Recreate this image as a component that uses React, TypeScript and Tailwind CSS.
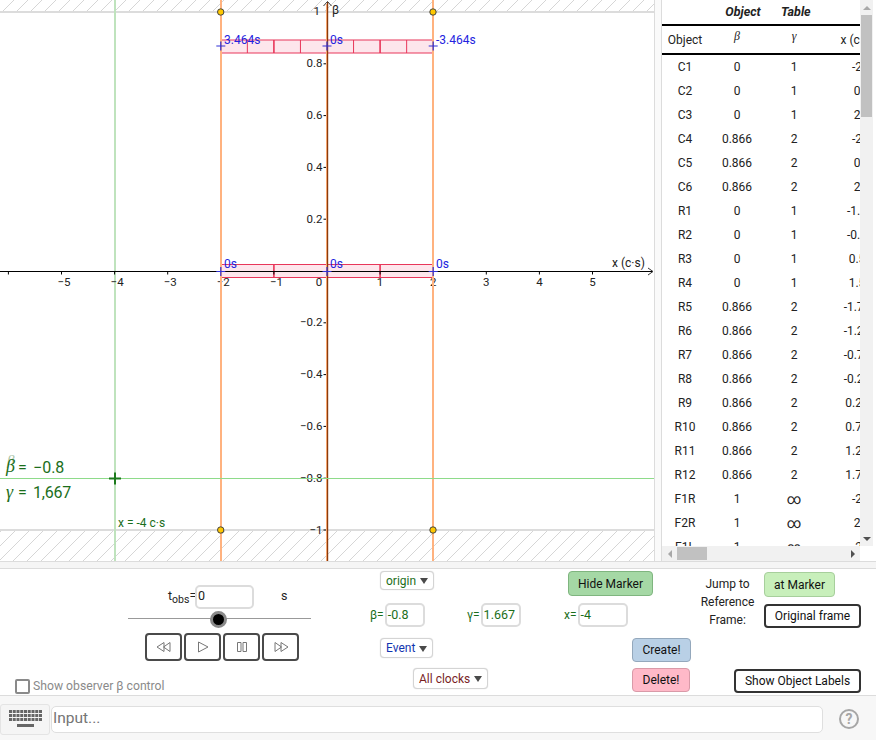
import React from "react";

const rows: [string, string, string, string][] = [
  ["C1", "0", "1", "-2"], ["C2", "0", "1", "0"], ["C3", "0", "1", "2"],
  ["C4", "0.866", "2", "-2"], ["C5", "0.866", "2", "0"], ["C6", "0.866", "2", "2"],
  ["R1", "0", "1", "-1.5"], ["R2", "0", "1", "-0.5"], ["R3", "0", "1", "0.5"], ["R4", "0", "1", "1.5"],
  ["R5", "0.866", "2", "-1.75"], ["R6", "0.866", "2", "-1.25"], ["R7", "0.866", "2", "-0.75"],
  ["R8", "0.866", "2", "-0.25"], ["R9", "0.866", "2", "0.25"], ["R10", "0.866", "2", "0.75"],
  ["R11", "0.866", "2", "1.25"], ["R12", "0.866", "2", "1.75"],
  ["F1R", "1", "∞", "-2"], ["F2R", "1", "∞", "2"], ["F1L", "1", "∞", "-2"],
];

const px = (v: number) => 327 + v * 53.1;
const py = (v: number) => 271 - v * 259;

function Graph() {
  const font = { fontFamily: "Roboto, sans-serif" };
  return (
    <svg width="654" height="561" viewBox="0 0 654 561" className="block" style={font}>
      <defs>
        <pattern id="hatch" width="14" height="14" patternUnits="userSpaceOnUse">
          <path d="M-1 15 L15 -1" stroke="#c4c4c4" strokeWidth="0.7" fill="none" />
          <path d="M-1 1 L1 -1 M13 15 L15 13" stroke="#c4c4c4" strokeWidth="0.7" fill="none" />
        </pattern>
      </defs>
      <rect x="0" y="0" width="654" height="12" fill="url(#hatch)" />
      <rect x="0" y="530" width="654" height="31" fill="url(#hatch)" />
      <rect x="0" y="11" width="654" height="2" fill="#dcdcdc" />
      <rect x="0" y="529" width="654" height="2" fill="#dcdcdc" />

      <rect x="114" y="0" width="2" height="561" fill="#bfe3bd" />

      {[40, 264.5].map((y) => (
        <rect key={y} x={220.7} y={y} width={212.4} height={13} fill="#fde6ec" stroke="#e8365a" strokeWidth={1} />
      ))}
      {[-1.5, -1, -0.5, 0.5, 1, 1.5].map((v) => (
        <line key={v} x1={px(v)} x2={px(v)} y1={40} y2={53} stroke="#e8365a" strokeWidth={v % 1 === 0 ? 1.6 : 1} />
      ))}
      {[-1, 1].map((v) => (
        <line key={v} x1={px(v)} x2={px(v)} y1={264.5} y2={277.5} stroke="#e8365a" strokeWidth={1.6} />
      ))}

      <line x1="0" x2="652" y1="271.5" y2="271.5" stroke="#000" strokeWidth="1" />
      <path d="M648 268 L653 271.5 L648 275" stroke="#000" fill="none" strokeWidth="0.8" />

      {[-6, -5, -4, -3, -2, -1, 1, 2, 3, 4, 5].map((v) => (
        <line key={v} x1={px(v)} x2={px(v)} y1={272} y2={274.5} stroke="#000" strokeWidth="1" />
      ))}
      {[-5, -4, -3, -2, -1, 1, 2, 3, 4, 5].map((v) => (
        <text key={v} x={v < 0 ? px(v) + 2.5 : px(v)} y={285.5} fontSize="11.5" textAnchor="middle" fill="#222">
          {v < 0 ? `−${-v}` : v}
        </text>
      ))}
      <text x="319" y="285.5" fontSize="11.5" textAnchor="middle" fill="#222">0</text>
      <text x="612" y="267" fontSize="12" fill="#222">x (c·s)</text>

      {[0.8, 0.6, 0.4, 0.2, -0.2, -0.4, -0.6, -0.8, -1].map((v) => (
        <g key={v}>
          <line x1={323.5} x2={327} y1={py(v)} y2={py(v)} stroke="#000" strokeWidth="1" />
          <text x="322.5" y={py(v) + 3.5} fontSize="11.5" textAnchor="end" fill="#222">
            {v < 0 ? `−${-v}` : v}
          </text>
        </g>
      ))}
      <text x="320" y="15" fontSize="11.5" textAnchor="end" fill="#222">1</text>
      <text x="332" y="14" fontSize="12" fill="#222">β</text>

      <rect x="220" y="0" width="2" height="561" fill="#ffb27f" />
      <rect x="432" y="0" width="2" height="561" fill="#ffb27f" />
      <rect x="326" y="4" width="1" height="557" fill="#f5a36c" />
      <rect x="327" y="2" width="1.2" height="559" fill="#8a3b0c" />
      <path d="M323.5 6 L327.5 1.5 L331.5 6" stroke="#222" fill="none" strokeWidth="0.9" />

      <line x1="0" x2="654" y1="478.5" y2="478.5" stroke="#8edb8a" strokeWidth="1" />
      <path d="M109 478.5 H121 M115 472.5 V484.5" stroke="#1c7a1c" strokeWidth="2" />
      <text x="118" y="527" fontSize="12" fill="#1b6e1b">x = -4 c·s</text>

      <g fill="#1b6e1b" fontSize="16">
        <text x="6" y="472" fontSize="18" fontFamily="'Liberation Serif', serif" fontStyle="italic">β</text>
        <text x="7" y="465" fontSize="15" fontFamily="'Liberation Serif', serif" fontStyle="italic" opacity="0.4">β</text>
        <text x="18" y="473">=</text>
        <text x="33" y="473">−0.8</text>
        <text x="6" y="498" fontSize="18" fontFamily="'Liberation Serif', serif" fontStyle="italic">γ</text>
        <text x="18" y="498">=</text>
        <text x="33" y="498" letterSpacing="-0.2">1,667</text>
      </g>

      {[-2, 0, 2].map((v) =>
        [46, 271.5].map((y) => (
          <path key={`${v}-${y}`} d={`M${px(v) - 4.5} ${y} H${px(v) + 4.5} M${px(v)} ${y - 4.5} V${y + 4.5}`} stroke="#3131d6" strokeWidth="1.2" />
        )),
      )}
      <g fill="#2323e0" fontSize="12">
        <text x="224" y="44">3.464s</text>
        <text x="330" y="44">0s</text>
        <text x="436" y="44">-3.464s</text>
        <text x="224" y="268">0s</text>
        <text x="330" y="268">0s</text>
        <text x="436" y="268">0s</text>
      </g>

      {[220.7, 433].map((x) =>
        [12, 530].map((y) => <circle key={`${x}-${y}`} cx={x} cy={y} r="3.2" fill="#ffc800" stroke="#444" strokeWidth="1" />),
      )}
    </svg>
  );
}

function ObjectTable() {
  const cols = "grid grid-cols-[46px_58px_56px_70px] w-[230px]";
  return (
    <div className="relative w-[198px] h-[546px] overflow-hidden bg-white text-[12px] text-[#222]">
      <div className={`${cols} h-[24px] items-center font-bold italic`}>
        <span />
        <span className="text-center text-[12.5px] relative left-[6px]">Object</span>
        <span className="text-left text-[12.5px] pl-[15px] whitespace-nowrap">Table</span>
        <span />
      </div>
      <div className={`${cols} h-[31px] items-center border-y-2 border-black`}>
        <span className="text-center">Object</span>
        <span className="text-center -mt-[7px] font-['Liberation_Serif',serif] italic">β</span>
        <span className="text-center -mt-[7px] font-['Liberation_Serif',serif] italic">γ</span>
        <span className="text-center">x (c·s)</span>
      </div>
      {rows.map((r) => (
        <div key={r[0]} className={`${cols} h-[24px] items-center`}>
          <span className="text-center">{r[0]}</span>
          <span className="text-center">{r[1]}</span>
          <span className={r[2] === "∞" ? "text-center text-[14px]" : "text-center"}>{r[2]}</span>
          <span className="text-center">{r[3]}</span>
        </div>
      ))}
    </div>
  );
}

function VScroll() {
  return (
    <div className="w-[13px] h-[546px] bg-[#f1f1f1] flex flex-col items-center">
      <div className="h-[15px] w-full flex items-center justify-center">
        <div className="w-0 h-0 border-x-[4px] border-x-transparent border-b-[4px] border-b-[#a8a8a8]" />
      </div>
      <div className="w-[11px] h-[102px] bg-[#c1c1c1]" />
      <div className="flex-1" />
      <div className="h-[15px] w-full flex items-center justify-center">
        <div className="w-0 h-0 border-x-[4px] border-x-transparent border-t-[4px] border-t-[#505050]" />
      </div>
    </div>
  );
}

function HScroll() {
  return (
    <div className="w-[198px] h-[15px] bg-[#f1f1f1] flex items-center">
      <div className="w-[15px] flex justify-center">
        <div className="w-0 h-0 border-y-[4px] border-y-transparent border-r-[4px] border-r-[#a8a8a8]" />
      </div>
      <div className="w-[30px] h-[13px] bg-[#c1c1c1]" />
      <div className="flex-1" />
      <div className="w-[15px] flex justify-center">
        <div className="w-0 h-0 border-y-[4px] border-y-transparent border-l-[4px] border-l-[#505050]" />
      </div>
    </div>
  );
}

function Field({ label, value, w }: { label: React.ReactNode; value: string; w: string }) {
  return (
    <div className="flex items-center text-[12px] text-[#1b6e1b]">
      <span>{label}</span>
      <div className={`${w} h-[24px] ml-[1px] border-2 border-[#dcdcdc] rounded-[5px] bg-white flex items-center pl-[1px] text-[12.5px]`}>
        {value}
      </div>
    </div>
  );
}

function Drop({ text, color, h }: { text: string; color: string; h: string }) {
  return (
    <div className={`inline-flex items-center ${h} px-[5px] gap-[4px] border border-[#d4d4d4] rounded-[4px] bg-white text-[12px] shadow-[0_0_1px_#ccc] ${color}`}>
      {text}
      <span className="w-0 h-0 border-x-[4.5px] border-x-transparent border-t-[6px] border-t-[#4a4a4a] mt-[1px]" />
    </div>
  );
}

function Btn({ text, cls }: { text: string; cls: string }) {
  return (
    <button className={`rounded-[4px] border text-[12px] text-[#111] flex items-center justify-center ${cls}`}>
      {text}
    </button>
  );
}

function PlayBtn({ children }: { children: React.ReactNode }) {
  return (
    <div className="w-[37px] h-[28px] border-2 border-[#4a4a4a] rounded-[4px] bg-white flex items-center justify-center">
      <svg width="16" height="12" viewBox="0 0 16 12" fill="none" stroke="#777" strokeWidth="1">
        {children}
      </svg>
    </div>
  );
}

export default function App() {
  return (
    <div className="w-[876px] h-[740px] bg-white overflow-hidden flex flex-col font-['Roboto',sans-serif] text-[#222]">
      <div className="flex h-[561px]">
        <Graph />
        <div className="w-[8px] h-full border-x border-[#dcdcdc] bg-[#fafafa]" />
        <div className="flex flex-col w-[211px]">
          <div className="flex">
            <ObjectTable />
            <VScroll />
          </div>
          <HScroll />
        </div>
      </div>
      <div className="h-[8px] bg-[#f5f5f5] border-t border-b border-[#dcdcdc]" />

      <div className="h-[126px] flex relative">
        <div className="w-[368px] flex flex-col shrink-0">
          <div className="flex items-center h-[23px] mt-[16px] ml-[168px] text-[12.5px]">
            <span className="w-[27px] whitespace-nowrap">
              t<sub className="text-[10.5px]">obs</sub>=
            </span>
            <div className="w-[59px] h-[24px] border-2 border-[#dcdcdc] rounded-[5px] flex items-center pl-[1px] text-[12.5px]">0</div>
            <span className="ml-[27px]">s</span>
          </div>
          <div className="relative h-[17px] mt-[3px] ml-[128px] w-[183px] flex items-center">
            <div className="w-full h-[1px] bg-[#999]" />
            <div className="absolute left-[82px] top-0 w-[17px] h-[17px] rounded-full bg-black border-[3px] border-[#8a8a8a]" />
          </div>
          <div className="flex gap-[2px] ml-[145px] mt-[6px]">
            <PlayBtn><path d="M8 1.5 L1 6 L8 10.5 Z M14 1.5 L7.5 6 L14 10.5 Z" /></PlayBtn>
            <PlayBtn><path d="M3.5 1 L13 6 L3.5 11 Z" /></PlayBtn>
            <PlayBtn><path d="M3.5 1.5 H7 V10.5 H3.5 Z M9 1.5 H12.5 V10.5 H9 Z" /></PlayBtn>
            <PlayBtn><path d="M2 1.5 L8.5 6 L2 10.5 Z M8 1.5 L15 6 L8 10.5 Z" /></PlayBtn>
          </div>
          <div className="flex items-center ml-[15px] mt-[16px] text-[12.2px] text-[#8a8a8a]">
            <div className="w-[15px] h-[15px] border-2 border-[#8a8a8a] rounded-[2px] mr-[3px] mt-[2px]" />
            Show observer β control
          </div>
        </div>

        <div className="w-[323px] flex flex-col shrink-0">
          <div className="flex justify-between items-start h-[34px] pt-[2px] ml-[12px] pr-[38px]">
            <Drop text="origin" color="text-[#1b6e1b]" h="h-[19px]" />
            <Btn text="Hide Marker" cls="h-[25px] w-[85px] bg-[#a5d8a5] border-[#7fb57f]" />
          </div>
          <div className="flex items-center pl-[2px]">
            <div className="w-[97px]"><Field label="β=" value="-0.8" w="w-[40px]" /></div>
            <div className="w-[97px]"><Field label="γ=" value="1.667" w="w-[40px]" /></div>
            <Field label="x=" value="-4" w="w-[50px]" />
          </div>
          <div className="flex justify-between items-start mt-[11px] ml-[12px] h-[30px]">
            <Drop text="Event" color="text-[#1235b0]" h="h-[20px]" />
            <Btn text="Create!" cls="h-[24px] w-[59px] bg-[#b9d0e6] border-[#94a8bc]" />
          </div>
          <div className="flex justify-between items-start ml-[45px] pr-[1px]">
            <Drop text="All clocks" color="text-[#7a1f1f]" h="h-[21px]" />
            <Btn text="Delete!" cls="h-[24px] w-[58px] bg-[#ffb9c8] border-[#d99aa8]" />
          </div>
        </div>

        <div className="flex-1 relative">
          <div className="flex items-start">
            <div className="w-[67px] text-[12px] leading-[18px] mt-[6px] ml-[3px] flex flex-col items-center">
              <span>Jump to</span>
              <span>Reference</span>
              <span>Frame:</span>
            </div>
            <div className="flex flex-col gap-[7px] ml-[3px] mt-[3px] items-start">
              <Btn text="at Marker" cls="h-[25px] w-[71px] bg-[#c8efbb] border-[#a7cf9c]" />
              <Btn text="Original frame" cls="h-[24px] w-[97px] bg-white border-2 border-[#333]" />
            </div>
          </div>
          <div className="flex justify-end w-[170px] mt-[40px]">
            <Btn text="Show Object Labels" cls="h-[24px] w-[127px] bg-white border-2 border-[#333]" />
          </div>
        </div>
      </div>

      <div className="flex-1 bg-[#f7f7f7] border-t border-[#dcdcdc] flex items-center pt-[2px]">
        <div className="w-[50px] h-[31px] bg-[#f5f5f5] border border-[#e4e4e4] rounded-[3px] flex items-center justify-center">
          <svg width="34" height="18" viewBox="0 0 34 18" fill="#666" className="ml-[2px]">
            {[0, 1, 2].map((r) =>
              Array.from({ length: 9 }).map((_, i) => <rect key={`${r}-${i}`} x={i * 3.75} y={r * 4} width="3" height="3" />),
            )}
            <rect x="8" y="14" width="17" height="3" />
          </svg>
        </div>
        <div className="w-[772px] h-[27px] ml-[1px] bg-white border border-[#dfdfdf] rounded-[5px] flex items-center pl-[1px] text-[15.5px] text-[#757575]">
          Input...
        </div>
        <svg width="20" height="20" viewBox="0 0 20 20" className="ml-[16px]">
          <circle cx="10" cy="10" r="9" fill="none" stroke="#a6a6a6" strokeWidth="2" />
          <text x="10" y="15" fontSize="14" fontWeight="700" fill="#a6a6a6" textAnchor="middle" fontFamily="Roboto, sans-serif">?</text>
        </svg>
      </div>
    </div>
  );
}
